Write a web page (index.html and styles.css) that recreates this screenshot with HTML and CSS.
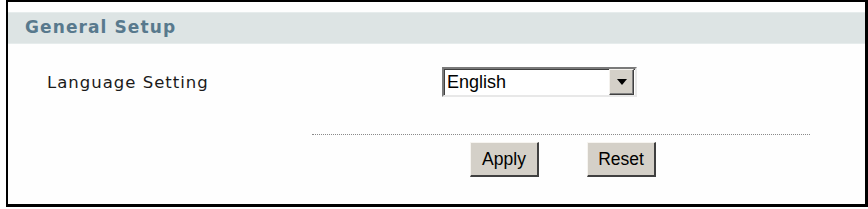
FILE: index.html
```html
<!DOCTYPE html>
<html>
<head>
<meta charset="utf-8">
<link rel="stylesheet" href="styles.css">
</head>
<body>
<div class="frame">
  <div class="header">General Setup</div>
  <div class="row">
    <div class="label">Language Setting</div>
    <div class="select">
      <span class="select-text">English</span>
      <span class="select-btn"><span class="arrow"></span></span>
    </div>
  </div>
  <div class="actions">
    <div class="divider"></div>
    <div class="buttons">
      <button class="btn">Apply</button>
      <button class="btn">Reset</button>
    </div>
  </div>
</div>
</body>
</html>
```

FILE: styles.css
```css
html, body {
  margin: 0;
  padding: 0;
  background: #ffffff;
}
body {
  font-family: "DejaVu Sans", Verdana, sans-serif;
}
.frame {
  box-sizing: border-box;
  margin-left: 6px;
  width: 862px;
  height: 207px;
  border-style: solid;
  border-color: #000;
  border-width: 2px 3px 3px 2px;
  background: #fefefe;
}
.header {
  margin-top: 10px;
  height: 32px;
  box-sizing: border-box;
  background: #dde4e4;
  border-top: 1px solid #e6ecec;
  border-bottom: 1px solid #e6ecec;
  padding-left: 17px;
  font-weight: bold;
  font-size: 17px;
  letter-spacing: 1.1px;
  line-height: 29px;
  color: #58798d;
}
.row {
  display: flex;
  align-items: center;
  margin-top: 23px;
  height: 30px;
}
.label {
  width: 434px;
  padding-left: 39px;
  box-sizing: border-box;
  font-size: 16.5px;
  letter-spacing: 1px;
  color: #1a1a1a;
}
.select {
  box-sizing: border-box;
  width: 195px;
  height: 30px;
  display: flex;
  align-items: center;
  justify-content: space-between;
  background: #fff;
  border-style: solid;
  border-width: 2px;
  border-color: #7a7a7a #e8e8e8 #e8e8e8 #7a7a7a;
  box-shadow: inset 1px 1px 0 #404040;
  padding: 0 1px 0 3px;
}
.select-text {
  font-family: "Liberation Sans", Arial, sans-serif;
  font-size: 18px;
  color: #000;
}
.select-btn {
  box-sizing: border-box;
  width: 25px;
  height: 26px;
  background: #d4d0c8;
  border-style: solid;
  border-width: 1px;
  border-color: #f4f2ee #404040 #404040 #f4f2ee;
  box-shadow: inset -1px -1px 0 #808080;
  display: flex;
  align-items: center;
  justify-content: center;
}
.arrow {
  width: 0;
  height: 0;
  border-left: 5px solid transparent;
  border-right: 5px solid transparent;
  border-top: 6px solid #000;
}
.actions {
  margin-top: 37px;
  margin-left: 304px;
  width: 498px;
}
.divider {
  border-top: 1px dotted #8a8a8a;
  height: 0;
}
.buttons {
  display: flex;
  justify-content: center;
  gap: 48px;
  margin-top: 7px;
  padding-left: 4px;
}
.btn {
  box-sizing: border-box;
  width: 69px;
  height: 35px;
  background: #d4d0c8;
  border-style: solid;
  border-width: 1px 2px 2px 1px;
  border-color: #f6f4f0 #404040 #404040 #f6f4f0;
  font-family: "Liberation Sans", Arial, sans-serif;
  font-size: 17.5px;
  color: #000;
  padding: 0;
}
```
